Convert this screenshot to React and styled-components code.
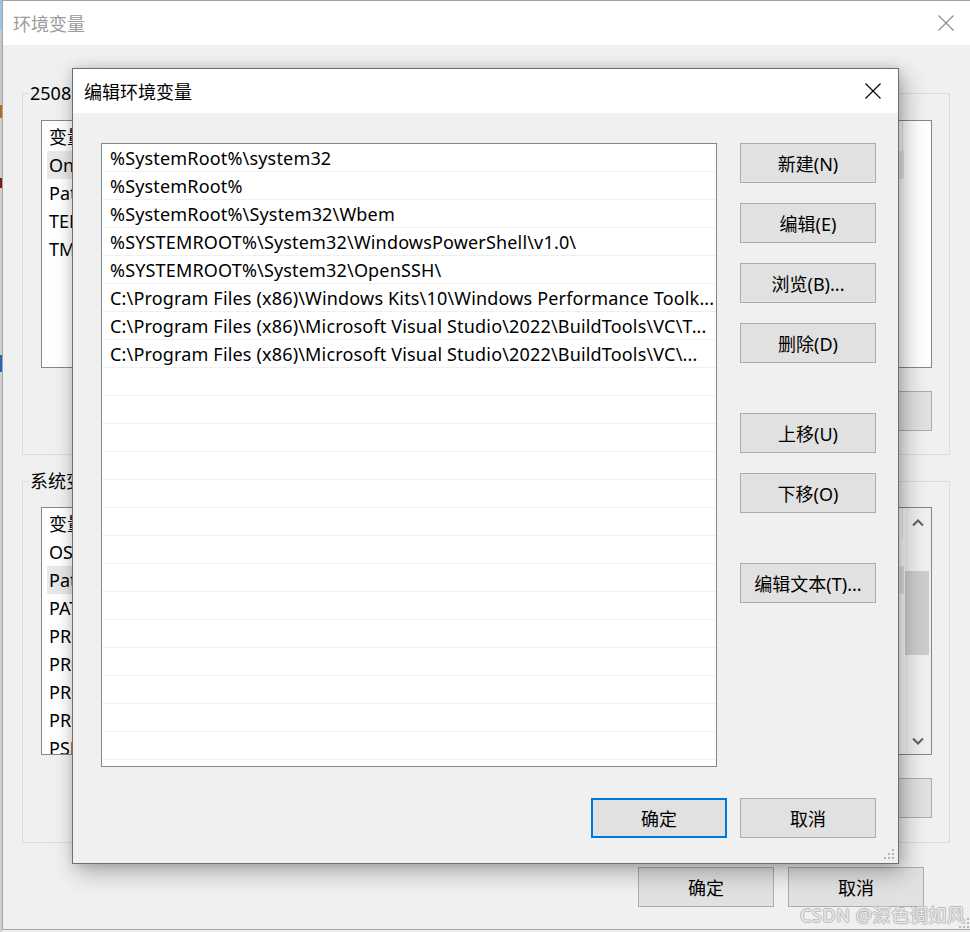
import React from 'react';
import styled, { createGlobalStyle } from 'styled-components';

const GlobalStyle = createGlobalStyle`
  html, body {
    margin: 0;
    padding: 0;
  }
  body {
    background: #f0f0f0;
    font-family: "Noto Sans", "Noto Sans CJK SC", sans-serif;
  }
`;

const UI_FONT = `"Noto Sans", "Noto Sans CJK SC", sans-serif`;

const Desktop = styled.div`
  position: relative;
  width: 970px;
  height: 932px;
  overflow: hidden;
  display: flex;
  align-items: flex-start;
  background: #f0f0f0;
  font-family: ${UI_FONT};
`;

const EdgeStrip = styled.div`
  flex: none;
  width: 2px;
  height: 932px;
  background: linear-gradient(
    #9ec3e6 0 30px, #c8c8c8 30px 105px, #b86a1c 105px 118px, #d0d0d0 118px 178px,
    #7a1c1c 178px 188px, #d0d0d0 188px 355px, #2a62b8 355px 372px, #d0d0d0 372px
  );
`;

/* ---------- window chrome ---------- */

const EnvWindow = styled.div`
  flex: none;
  width: 979px;
  height: 930px;
  box-sizing: border-box;
  border: 1px solid #a4a4a4;
  border-right: none;
  background: #f0f0f0;
  display: flex;
  flex-direction: column;
`;

const TitleBar = styled.div`
  flex: none;
  height: 44px;
  background: #fff;
  display: flex;
  align-items: center;
  justify-content: space-between;
  padding-left: ${p => p.$pl}px;
  font-size: 18px;
  color: ${p => (p.$inactive ? '#9b9b9b' : '#000')};
`;

const CloseButton = styled.div`
  width: ${p => p.$w}px;
  height: 44px;
  display: flex;
  align-items: center;
  justify-content: center;
`;

const CloseIcon = ({ color }) => (
  <svg width="16" height="16" viewBox="0 0 16 16">
    <path d="M0.5 0.5 L15.5 15.5 M15.5 0.5 L0.5 15.5" stroke={color} strokeWidth="1.1" fill="none" />
  </svg>
);

/* ---------- background window content ---------- */

const WinBody = styled.div`
  flex: 1;
  padding: 36px 0 0 19px;
  display: flex;
  flex-direction: column;
`;

const Group = styled.fieldset`
  margin: ${p => p.$mt}px 0 0;
  width: 928px;
  box-sizing: border-box;
  min-inline-size: 0;
  padding: ${p => p.$pt}px 17px ${p => p.$pb}px 18px;
  border: 1px solid #dcdcdc;
`;

const GroupLabel = styled.legend`
  margin-left: -12px;
  padding: 0 1px;
  font-size: 18px;
  line-height: 24px;
  color: #000;
`;

const VarList = styled.div`
  height: 248px;
  box-sizing: border-box;
  border: 1px solid #828790;
  background: #fff;
  overflow: hidden;
  display: flex;
`;

const VarColumn = styled.div`
  flex: 1;
  min-width: 0;
  display: flex;
  flex-direction: column;
`;

const VarHeader = styled.div`
  flex: none;
  height: 30px;
  display: flex;
`;

const HeaderCell = styled.div`
  width: ${p => p.$w}px;
  box-sizing: border-box;
  padding-left: 7px;
  display: flex;
  align-items: center;
  border-right: 1px solid #e5e5e5;
  font-size: 18px;
  color: #000;
  white-space: nowrap;
  overflow: hidden;
`;

const VarRow = styled.div`
  flex: none;
  height: 28px;
  width: 857px;
  margin-left: 5px;
  padding-left: 2px;
  box-sizing: border-box;
  display: flex;
  align-items: center;
  background: ${p => (p.$selected ? '#e8e8e8' : 'transparent')};
  font-size: 18px;
  color: #000;
  white-space: nowrap;
`;

const VarName = styled.span`
  width: 224px;
  flex: none;
`;

const Scrollbar = styled.div`
  flex: none;
  width: 26px;
  background: #f0f0f0;
  display: flex;
  flex-direction: column;
  align-items: center;
`;

const ScrollArrow = styled.div`
  flex: none;
  height: ${p => p.$h}px;
  display: flex;
  align-items: center;
  justify-content: center;
`;

const ScrollTrack = styled.div`
  flex: 1;
  width: 100%;
`;

const ScrollThumb = styled.div`
  margin: 33px 2px 0 0;
  height: 84px;
  background: #cdcdcd;
`;

const Chevron = ({ down }) => (
  <svg width="12" height="8" viewBox="0 0 12 8">
    <path
      d={down ? 'M1 1.5 L6 6.5 L11 1.5' : 'M1 6.5 L6 1.5 L11 6.5'}
      stroke="#606060"
      strokeWidth="2"
      fill="none"
    />
  </svg>
);

const ButtonRow = styled.div`
  display: flex;
  justify-content: flex-end;
  gap: 14px;
  margin-top: ${p => p.$mt || 0}px;
  padding-right: ${p => p.$pr || 0}px;
  width: ${p => (p.$w ? `${p.$w}px` : 'auto')};
  box-sizing: border-box;
`;

const Button = styled.button`
  flex: none;
  width: 136px;
  height: 40px;
  box-sizing: border-box;
  padding: 0;
  margin: 0;
  border: ${p => (p.$default ? '2px solid #0078d7' : '1px solid #adadad')};
  border-radius: 0;
  background: #e1e1e1;
  font-family: ${UI_FONT};
  font-size: 18px;
  color: #000;
  white-space: nowrap;
`;

/* ---------- edit dialog ---------- */

const Dialog = styled.div`
  position: absolute;
  left: 72px;
  top: 68px;
  width: 827px;
  height: 796px;
  box-sizing: border-box;
  border: 1px solid #6f6f6f;
  background: #f0f0f0;
  display: flex;
  flex-direction: column;
  box-shadow: 5px 8px 22px rgba(0, 0, 0, 0.3), 0 0 10px rgba(0, 0, 0, 0.12);
`;

const DialogBody = styled.div`
  display: flex;
  gap: 23px;
  padding: 30px 22px 0 28px;
`;

const PathList = styled.div`
  flex: none;
  width: 616px;
  height: 624px;
  box-sizing: border-box;
  border: 1px solid #828790;
  background: #fff;
  overflow: hidden;
`;

const PathRow = styled.div`
  height: 28px;
  box-sizing: border-box;
  border-bottom: 1px solid #f0f0f0;
  padding: 0 8px;
  display: flex;
  align-items: center;
  font-size: 18px;
  letter-spacing: 0.17px;
  color: #000;
  white-space: nowrap;
  overflow: hidden;
`;

const ButtonColumn = styled.div`
  display: flex;
  flex-direction: column;
  gap: 20px;
`;

const Spacer = styled.div`
  height: ${p => p.$h}px;
`;

const DialogFooter = styled.div`
  display: flex;
  justify-content: flex-end;
  gap: 13px;
  padding: 31px 22px 0;
`;

const Grip = styled.svg`
  position: absolute;
  right: ${p => p.$r}px;
  bottom: ${p => p.$b}px;
`;

const GripIcon = ({ r, b }) => (
  <Grip $r={r} $b={b} width="12" height="12" viewBox="0 0 12 12">
    <g fill="#b8b8b8">
      <rect x="9" y="0" width="2" height="2" />
      <rect x="5" y="4" width="2" height="2" />
      <rect x="9" y="4" width="2" height="2" />
      <rect x="1" y="8" width="2" height="2" />
      <rect x="5" y="8" width="2" height="2" />
      <rect x="9" y="8" width="2" height="2" />
    </g>
  </Grip>
);

const Watermark = styled.div`
  position: absolute;
  left: 800px;
  top: 902px;
  font-size: 18px;
  line-height: 26px;
  letter-spacing: 0.6px;
  color: #e9e9e9;
  text-shadow: 1px 0 0 #bcbcbc, -1px 0 0 #bcbcbc, 0 1px 0 #bcbcbc, 0 -1px 0 #bcbcbc;
  white-space: nowrap;
`;

const userVars = ['OneDrive', 'Path', 'TEMP', 'TMP'];
const systemVars = [
  'OS',
  'Path',
  'PATHEXT',
  'PROCESSOR_ARCHITECTURE',
  'PROCESSOR_IDENTIFIER',
  'PROCESSOR_LEVEL',
  'PROCESSOR_REVISION',
  'PSModulePath',
];

const paths = [
  '%SystemRoot%\\system32',
  '%SystemRoot%',
  '%SystemRoot%\\System32\\Wbem',
  '%SYSTEMROOT%\\System32\\WindowsPowerShell\\v1.0\\',
  '%SYSTEMROOT%\\System32\\OpenSSH\\',
  'C:\\Program Files (x86)\\Windows Kits\\10\\Windows Performance Toolk...',
  'C:\\Program Files (x86)\\Microsoft Visual Studio\\2022\\BuildTools\\VC\\T...',
  'C:\\Program Files (x86)\\Microsoft Visual Studio\\2022\\BuildTools\\VC\\...',
];

const rows = Array.from({ length: 22 }, (_, i) => paths[i] || '');

const VarTable = ({ names, selected, scroll }) => (
  <VarList>
    <VarColumn>
      <VarHeader>
        <HeaderCell $w={230}>变量</HeaderCell>
        <HeaderCell $w={631}>值</HeaderCell>
      </VarHeader>
      {names.map(n => (
        <VarRow key={n} $selected={n === selected}>
          <VarName>{n}</VarName>
        </VarRow>
      ))}
    </VarColumn>
    {scroll && (
      <Scrollbar>
        <ScrollArrow $h={30}>
          <Chevron />
        </ScrollArrow>
        <ScrollTrack>
          <ScrollThumb />
        </ScrollTrack>
        <ScrollArrow $h={26}>
          <Chevron down />
        </ScrollArrow>
      </Scrollbar>
    )}
  </VarList>
);

export default function App() {
  return (
    <Desktop>
      <GlobalStyle />
      <EdgeStrip />
      <EnvWindow>
        <TitleBar $pl={10} $inactive>
          <span>环境变量</span>
          <CloseButton $w={70}>
            <CloseIcon color="#8a8a8a" />
          </CloseButton>
        </TitleBar>
        <WinBody>
          <Group $mt={0} $pt={15} $pb={23}>
            <GroupLabel>2508 的用户变量(U)</GroupLabel>
            <VarTable names={userVars} selected="OneDrive" />
            <ButtonRow $mt={23}>
              <Button>新建(N)...</Button>
              <Button>编辑(E)...</Button>
              <Button>删除(D)</Button>
            </ButtonRow>
          </Group>
          <Group $mt={14} $pt={14} $pb={24}>
            <GroupLabel>系统变量(S)</GroupLabel>
            <VarTable names={systemVars} selected="Path" scroll />
            <ButtonRow $mt={23}>
              <Button>新建(W)...</Button>
              <Button>编辑(I)...</Button>
              <Button>删除(L)</Button>
            </ButtonRow>
          </Group>
          <ButtonRow $mt={24} $w={928} $pr={26}>
            <Button>确定</Button>
            <Button>取消</Button>
          </ButtonRow>
        </WinBody>
      </EnvWindow>

      <Dialog>
        <TitleBar $pl={11}>
          <span>编辑环境变量</span>
          <CloseButton $w={50}>
            <CloseIcon color="#000" />
          </CloseButton>
        </TitleBar>
        <DialogBody>
          <PathList>
            {rows.map((p, i) => (
              <PathRow key={i}>{p}</PathRow>
            ))}
          </PathList>
          <ButtonColumn>
            <Button>新建(N)</Button>
            <Button>编辑(E)</Button>
            <Button>浏览(B)...</Button>
            <Button>删除(D)</Button>
            <Spacer $h={10} />
            <Button>上移(U)</Button>
            <Button>下移(O)</Button>
            <Spacer $h={10} />
            <Button>编辑文本(T)...</Button>
          </ButtonColumn>
        </DialogBody>
        <DialogFooter>
          <Button $default>确定</Button>
          <Button>取消</Button>
        </DialogFooter>
        <GripIcon r={3} b={2} />
      </Dialog>

      <GripIcon r={0} b={2} />
      <Watermark>CSDN @深色调如风</Watermark>
    </Desktop>
  );
}
